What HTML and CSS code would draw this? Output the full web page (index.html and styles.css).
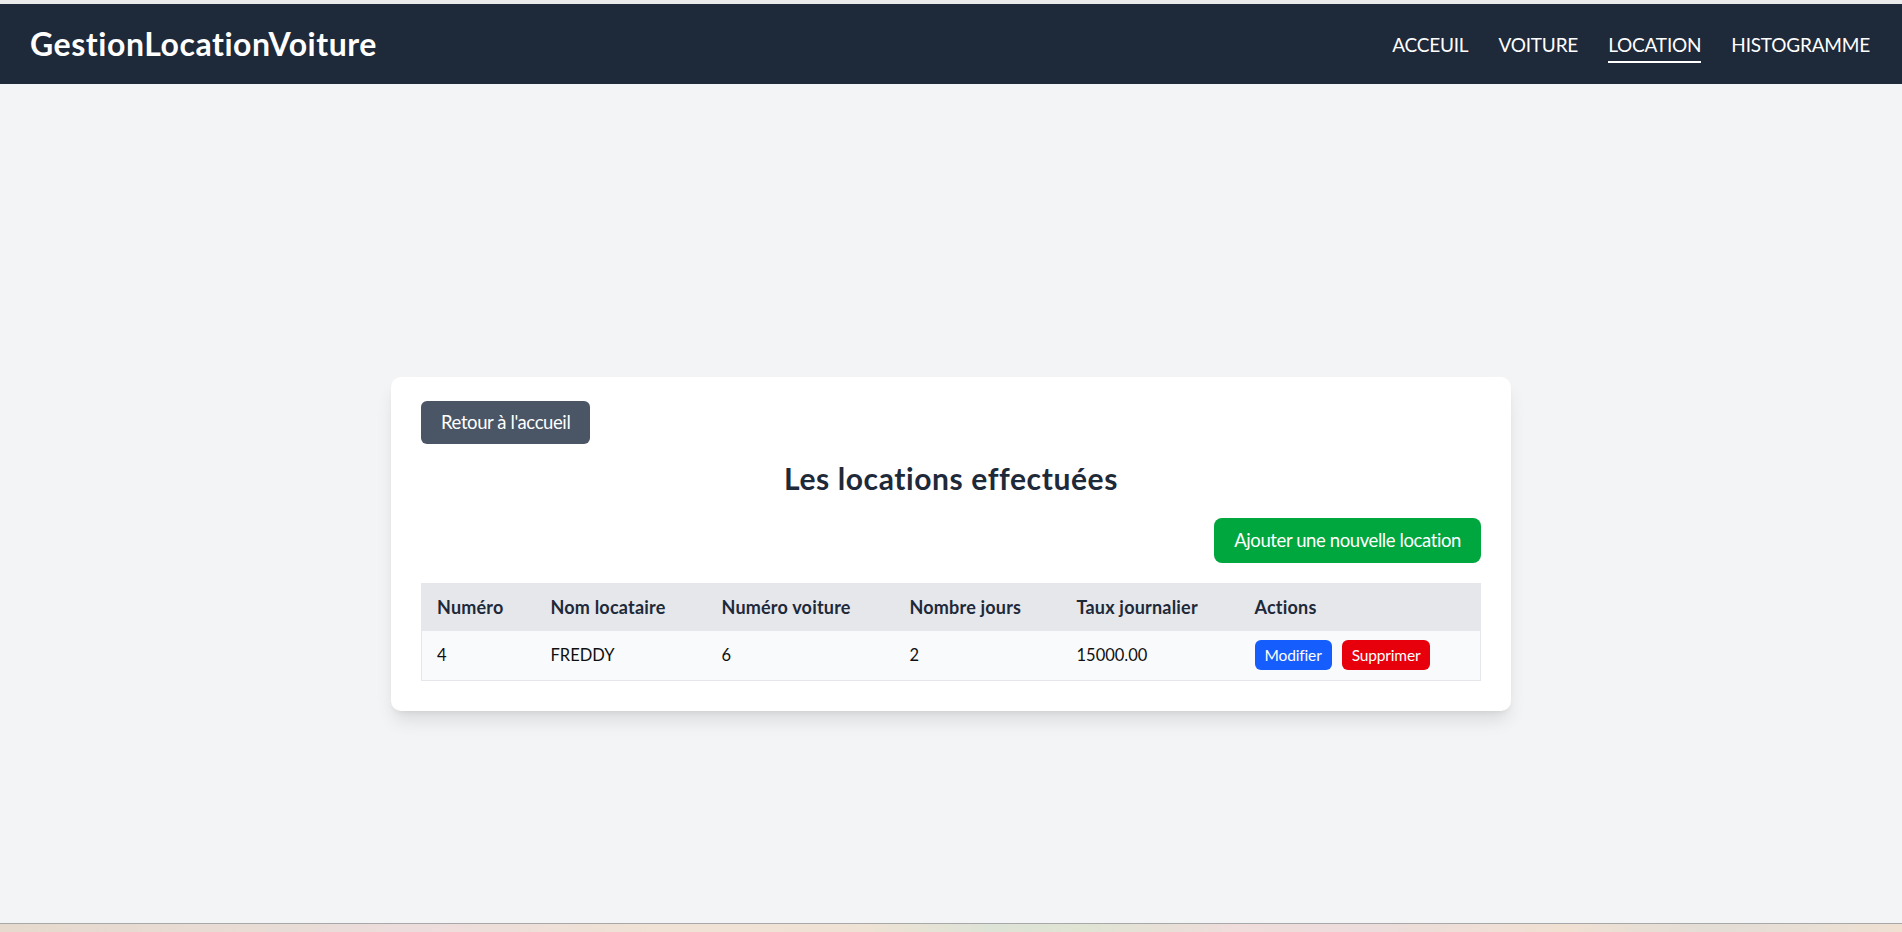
FILE: index.html
```html
<!DOCTYPE html>
<html lang="fr">
<head>
<meta charset="utf-8">
<title>GestionLocationVoiture</title>
<link rel="stylesheet" href="styles.css">
</head>
<body>
<div class="page">
  <div class="top-strip"></div>
  <header class="topbar">
    <div class="brand">GestionLocationVoiture</div>
    <nav class="nav">
      <a class="nav-link" href="#">ACCEUIL</a>
      <a class="nav-link" href="#">VOITURE</a>
      <a class="nav-link active" href="#">LOCATION</a>
      <a class="nav-link" href="#">HISTOGRAMME</a>
    </nav>
  </header>
  <main class="main">
    <section class="card">
      <div class="back-row"><a class="btn btn-gray" href="#">Retour à l'accueil</a></div>
      <h1 class="title">Les locations effectuées</h1>
      <div class="add-row"><a class="btn btn-green" href="#">Ajouter une nouvelle location</a></div>
      <table class="table">
        <thead>
          <tr>
            <th class="c1">Numéro</th>
            <th class="c2">Nom locataire</th>
            <th class="c3">Numéro voiture</th>
            <th class="c4">Nombre jours</th>
            <th class="c5">Taux journalier</th>
            <th class="c6">Actions</th>
          </tr>
        </thead>
        <tbody>
          <tr>
            <td>4</td>
            <td>FREDDY</td>
            <td>6</td>
            <td>2</td>
            <td>15000.00</td>
            <td><div class="actions"><a class="sbtn sbtn-blue" href="#">Modifier</a><a class="sbtn sbtn-red" href="#">Supprimer</a></div></td>
          </tr>
        </tbody>
      </table>
    </section>
  </main>
  <div class="taskbar"></div>
</div>
</body>
</html>
```
FILE: styles.css
```css
* { box-sizing: border-box; }
html, body { margin: 0; padding: 0; }
body {
  font-family: "Lato", "Noto Sans", sans-serif;
  font-variant-ligatures: none;
  background: #f3f4f6;
  color: #1e2939;
}
a { text-decoration: none; color: inherit; }

.page {
  height: 100vh;
  display: flex;
  flex-direction: column;
  overflow: hidden;
}
.top-strip {
  height: 3.5px;
  background: #ebebeb;
  flex: none;
}
.topbar {
  flex: none;
  height: 80px;
  background: #1e2939;
  display: flex;
  align-items: center;
  justify-content: space-between;
  padding: 0 32px 0 30px;
}
.brand {
  color: #fff;
  font-weight: 700;
  font-size: 32px;
  letter-spacing: 0.55px;
  line-height: 1;
}
.nav {
  display: flex;
  gap: 30px;
  align-items: center;
}
.nav-link {
  color: #fff;
  font-size: 19px;
  letter-spacing: -0.2px;
  line-height: 26px;
  padding-top: 7px;
  padding-bottom: 3px;
  border-bottom: 2px solid transparent;
}
.nav-link.active { border-bottom-color: #fff; }

.main {
  flex: 1;
  padding-top: 293px;
  display: flex;
  justify-content: center;
  align-items: flex-start;
}
.card {
  width: 1120px;
  background: #fff;
  border-radius: 10px;
  box-shadow: 0 12px 18px -3px rgba(0,0,0,0.1), 0 4px 7px -4px rgba(0,0,0,0.1);
  padding: 24px 30px 30px;
}
.back-row { display: flex; }
.btn {
  display: inline-block;
  color: #fff;
  font-size: 18.5px;
  letter-spacing: -0.4px;
  border-radius: 6px;
}
.btn-gray {
  background: #4a5565;
  padding: 0 20px;
  height: 43px;
  line-height: 43px;
}
.title {
  margin: 12px 0 18px;
  text-align: center;
  font-size: 30px;
  letter-spacing: 0.6px;
  line-height: 44px;
  font-weight: 700;
  color: #1e2939;
}
.add-row {
  display: flex;
  justify-content: flex-end;
  margin-bottom: 20px;
}
.btn-green {
  background: #00a63e;
  padding: 0 20px;
  height: 45px;
  line-height: 45px;
  border-radius: 8px;
}
.table {
  width: 100%;
  border-collapse: collapse;
  table-layout: fixed;
  border: 1px solid #e5e7eb;
}
.table th {
  background: #e5e7eb;
  text-align: left;
  font-weight: 700;
  font-size: 18px;
  letter-spacing: 0.2px;
  color: #1e2939;
  height: 47px;
  padding: 0 15px;
}
.table td {
  background: #f9fafb;
  height: 50px;
  padding: 0 15px;
  font-size: 16.5px;
  color: #101010;
  border-top: 1px solid #e5e7eb;
}
.c1 { width: 114px; }
.c2 { width: 171px; }
.c3 { width: 188px; }
.c4 { width: 167px; }
.c5 { width: 178px; }
.actions { display: flex; gap: 10px; align-items: center; }
.sbtn {
  display: inline-block;
  color: #fff;
  font-size: 15.5px;
  letter-spacing: -0.15px;
  height: 30px;
  line-height: 30px;
  padding: 0 10px;
  border-radius: 6px;
}
.sbtn-blue { background: #155dfc; }
.sbtn-red { background: #e7000b; }

.taskbar {
  flex: none;
  height: 9px;
  border-top: 1px solid #a8a8a8;
  background: linear-gradient(90deg, #e6d9cd 0%, #e8dcd6 15%, #eddcdc 22%, #f0e2d4 35%, #efe2d4 45%, #dde3d6 52%, #dfe4d3 57%, #efdcdb 65%, #ecdcdb 72%, #f0e0d2 82%, #e3ddd6 90%, #efe0d2 100%);
}
```
